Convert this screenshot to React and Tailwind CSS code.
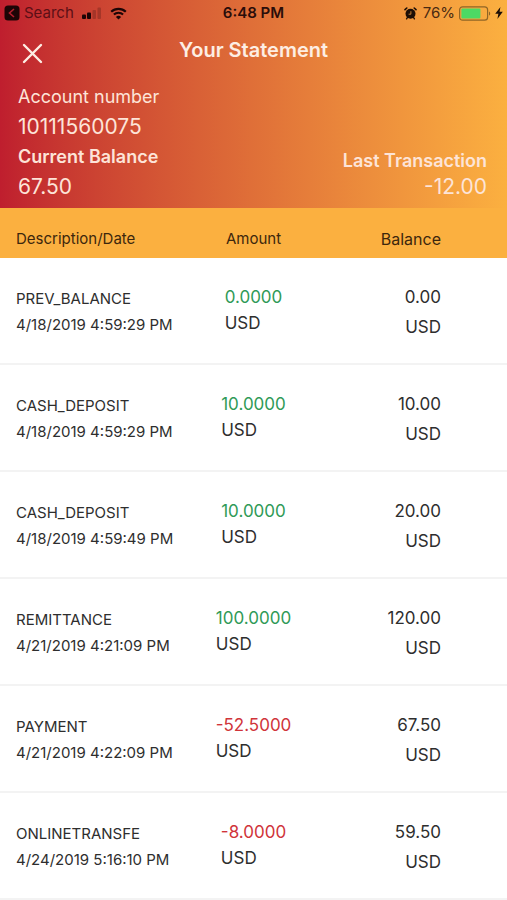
import React from "react";

const transactions = [
  { type: "PREV_BALANCE", date: "4/18/2019 4:59:29 PM", amount: "0.0000", balance: "0.00" },
  { type: "CASH_DEPOSIT", date: "4/18/2019 4:59:29 PM", amount: "10.0000", balance: "10.00" },
  { type: "CASH_DEPOSIT", date: "4/18/2019 4:59:49 PM", amount: "10.0000", balance: "20.00" },
  { type: "REMITTANCE", date: "4/21/2019 4:21:09 PM", amount: "100.0000", balance: "120.00" },
  { type: "PAYMENT", date: "4/21/2019 4:22:09 PM", amount: "-52.5000", balance: "67.50" },
  { type: "ONLINETRANSFE", date: "4/24/2019 5:16:10 PM", amount: "-8.0000", balance: "59.50" },
];

function StatusBar() {
  return (
    <div className="grid grid-cols-[1fr_auto_1fr] items-center h-[26px] pl-1 pr-1 text-[15px] text-[#2a0d0a]">
      <div className="flex items-center">
        <a href="#" className="flex items-center gap-1 text-[#5c0f16]">
          <svg width="16" height="16" viewBox="0 0 16 16" fill="none">
            <rect x="0.5" y="0.5" width="15" height="15" rx="3.5" fill="#1c0506" />
            <path d="M10 4L5.5 8L10 12" stroke="#b3202f" strokeWidth="1.6" />
          </svg>
          Search
        </a>
        <svg className="ml-2" width="20" height="14" viewBox="0 0 20 14">
          <rect x="0" y="8.5" width="4" height="4.5" rx="1" fill="#1c0506" />
          <rect x="5" y="6.5" width="4" height="6.5" rx="1" fill="#1c0506" />
          <rect x="10.5" y="4" width="3.5" height="9" rx="1" fill="#1c0506" opacity="0.22" />
          <rect x="15.5" y="1.5" width="3.5" height="11.5" rx="1" fill="#1c0506" opacity="0.22" />
        </svg>
        <svg className="ml-2" width="17" height="13" viewBox="0 0 17 13" fill="none">
          <path d="M1.2 4.8A10.6 10.6 0 0 1 15.8 4.8" stroke="#1c0506" strokeWidth="2.2" />
          <path d="M3.9 7.6A6.7 6.7 0 0 1 13.1 7.6" stroke="#1c0506" strokeWidth="2.1" />
          <path d="M8.5 12.6L5.9 9.9A3.8 3.8 0 0 1 11.1 9.9Z" fill="#1c0506" />
        </svg>
      </div>

      <span className="font-semibold">6:48 PM</span>

      <div className="flex items-center justify-end">
        {/* Alarm */}
        <svg width="13" height="13" viewBox="0 0 13 13" fill="none">
          <circle cx="6.5" cy="6.8" r="5" fill="#1c0e06" />
          <path d="M1 2.6L2.8 1M12 2.6L10.2 1" stroke="#1c0e06" strokeWidth="1.6" strokeLinecap="round" />
          <path d="M3.4 10.5L2.6 11.8M9.6 10.5L10.4 11.8" stroke="#1c0e06" strokeWidth="1.4" strokeLinecap="round" />
          <path d="M6.9 4.2V7.2H4.6" stroke="#ef9a3e" strokeWidth="0.8" />
        </svg>
        <span className="ml-1.5 text-[#4a2a12]">76%</span>
        {/* Battery */}
        <svg className="ml-1" width="32" height="15" viewBox="0 0 32 15" fill="none">
          <rect x="0.6" y="0.8" width="28" height="13.4" rx="3" stroke="#8f6526" strokeWidth="1.2" />
          <rect x="2.4" y="2.6" width="19" height="9.8" rx="1" fill="#4cd964" />
          <path d="M30 5.4C31.6 6 31.6 9 30 9.6Z" fill="#8f6526" />
        </svg>
        <svg className="ml-1" width="8" height="12" viewBox="0 0 8 12">
          <path d="M5.4 0L0.2 6.8H3.4L2.4 12L7.8 4.8H4.6Z" fill="#1c0e06" />
        </svg>
      </div>
    </div>
  );
}

function Header() {
  return (
    <header className="bg-linear-to-r from-[#bf1e2e] to-[#fbb040] pb-1.5">
      <StatusBar />
      <div className="grid grid-cols-[1fr_auto_1fr] items-center h-14 px-[18px] text-[#fdeee4]">
        <button type="button" aria-label="Close" className="justify-self-start px-1 pb-0.5">
          <svg width="21" height="21" viewBox="0 0 21 21" fill="none">
            <path d="M2 2L19 19M19 2L2 19" stroke="currentColor" strokeWidth="2.4" strokeLinecap="round" />
          </svg>
        </button>
        <h1 className="text-xl font-semibold leading-8 pb-2">Your Statement</h1>
      </div>
      <div className="flex items-end justify-between pl-[18px] pr-5 text-[#fde4d8]">
        <div>
          <p className="text-lg leading-[30px]">Account number</p>
          <p className="text-[21px] leading-[30px]">10111560075</p>
          <p className="text-lg leading-[30px] font-semibold">Current Balance</p>
          <p className="text-[21px] leading-[30px]">67.50</p>
        </div>
        <div className="text-right pb-0.5">
          <p className="text-lg leading-[26px] font-semibold">Last Transaction</p>
          <p className="text-[21px] leading-[26px]">-12.00</p>
        </div>
      </div>
    </header>
  );
}

export default function App() {
  return (
    <div className="min-h-screen bg-white font-['Inter','Liberation_Sans',sans-serif]">
      <Header />
      <table className="w-full table-fixed border-collapse text-[#2e2e2e]">
        <thead className="bg-[#fbb040] text-[#3d270d]">
          <tr className="h-[50px]">
            <th className="w-[36%] pl-4 pt-3 text-left text-[15px] font-normal">Description/Date</th>
            <th className="w-[28%] pt-3 text-center text-[15px] font-normal">Amount</th>
            <th className="w-[36%] pr-[66px] pt-3 text-right text-base font-normal">Balance</th>
          </tr>
        </thead>
        <tbody>
          {transactions.map((item, i) => (
            <tr key={i} className="h-[107px] align-top shadow-[inset_0_-2px_0_#f3f3f3]">
              <td className="pl-4 pt-7 whitespace-nowrap">
                <p className="text-[15px] leading-[26px]">{item.type}</p>
                <p className="text-[15px] leading-[26px]">{item.date}</p>
              </td>
              <td className="pt-[26px] text-center">
                <div className="inline-block text-left text-[17px] leading-[26px]">
                  <p className={item.amount.startsWith("-") ? "text-[#d0343a]" : "text-[#2f9a57]"}>
                    {item.amount}
                  </p>
                  <p>USD</p>
                </div>
              </td>
              <td className="pr-[66px] pt-6 text-right text-[17px] leading-[30px]">
                <p>{item.balance}</p>
                <p>USD</p>
              </td>
            </tr>
          ))}
        </tbody>
      </table>
    </div>
  );
}
